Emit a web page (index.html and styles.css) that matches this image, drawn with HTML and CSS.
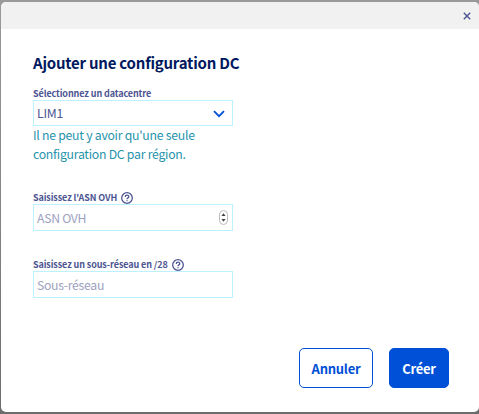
FILE: index.html
```html
<!DOCTYPE html>
<html lang="fr">
<head>
<meta charset="utf-8">
<title>Ajouter une configuration DC</title>
<link rel="stylesheet" href="styles.css">
</head>
<body>
<div class="modal">
  <header class="modal-header">
    <svg class="close" viewBox="0 0 8 8"><path d="M.8 .8 7.2 7.2M7.2 .8 .8 7.2"/></svg>
  </header>
  <main class="modal-body">
    <h1 class="title">Ajouter une configuration DC</h1>
    <div class="field field-select">
      <div class="label">Sélectionnez un datacentre</div>
      <div class="control select"><span class="value">LIM1</span>
        <svg class="chevron" viewBox="0 0 12 8"><path d="M1 1.2 6 6.2 11 1.2"/></svg>
      </div>
      <p class="help">Il ne peut y avoir qu'une seule<br>configuration DC par région.</p>
    </div>
    <div class="field field-asn">
      <div class="label">Saisissez l'ASN OVH
        <svg class="info" viewBox="0 0 12 12"><circle cx="6" cy="6" r="5.3"/><path d="M4.3 4.9C4.3 2.6 7.8 2.7 7.8 4.7 7.8 5.9 6 5.8 6 7.2M6 8.2v1.1"/></svg>
      </div>
      <div class="control"><span class="placeholder">ASN OVH</span>
        <svg class="spinner" viewBox="0 0 9 15"><rect x=".5" y=".5" width="8" height="14" rx="4"/><path d="M2.4 6 4.5 3.2 6.6 6zM2.4 9 4.5 11.8 6.6 9z"/></svg>
      </div>
    </div>
    <div class="field">
      <div class="label">Saisissez un sous-réseau en /28
        <svg class="info" viewBox="0 0 12 12"><circle cx="6" cy="6" r="5.3"/><path d="M4.3 4.9C4.3 2.6 7.8 2.7 7.8 4.7 7.8 5.9 6 5.8 6 7.2M6 8.2v1.1"/></svg>
      </div>
      <div class="control"><span class="placeholder">Sous-réseau</span></div>
    </div>
  </main>
  <footer class="actions">
    <button class="button cancel">Annuler</button>
    <button class="button create">Créer</button>
  </footer>
</div>
</body>
</html>
```
FILE: styles.css
```css
* { box-sizing: border-box; }
body {
  margin: 0;
  height: 414px;
  padding: 2px 1px;
  overflow: hidden;
  background: linear-gradient(#999 0, #858585 50%, #6c6c6c 100%);
  font-family: "Noto Sans CJK SC", "Noto Sans", sans-serif;
  color: #4d5592;
}
.modal {
  display: flex;
  flex-direction: column;
  width: 478px;
  height: 410px;
  border-radius: 5px;
  overflow: hidden;
  background: #fff;
}
.modal-header {
  flex: none;
  display: flex;
  justify-content: flex-end;
  height: 27px;
  padding: 10px 8px 0 0;
  background: #f1f1f1;
}
svg { flex: none; fill: none; }
.close { width: 8px; height: 8px; stroke: #4d5592; stroke-width: 1.4; }
.modal-body { flex: 1; padding: 23px 32px 0; }
.title {
  margin: 0;
  font-size: 15px;
  line-height: 22px;
  letter-spacing: -.23px;
  font-weight: 700;
  color: #00185e;
  white-space: nowrap;
}
.field { width: 200px; }
.field-select { height: 117px; padding-top: 13px; }
.field-asn { height: 67px; }
.label {
  display: flex;
  align-items: center;
  gap: 4px;
  height: 13px;
  font-size: 9px;
  line-height: 13px;
  letter-spacing: -.1px;
  font-weight: 700;
  white-space: nowrap;
}
.info { width: 12px; height: 12px; stroke: #4d5592; stroke-width: 1.3; }
.control {
  display: flex;
  align-items: center;
  justify-content: space-between;
  height: 27px;
  padding: 0 4px 0 3px;
  border: 1px solid #bef1ff;
  font-size: 12.25px;
  line-height: 20px;
}
.select { height: 26px; padding-right: 7px; }
.value { letter-spacing: -.2px; }
.placeholder { color: #9da1c0; letter-spacing: -.3px; }
.chevron { width: 12px; height: 8px; margin-top: 2px; stroke: #0050d7; stroke-width: 1.8; }
.spinner { width: 9px; height: 15px; stroke: #bbb; }
.spinner path { fill: #444; stroke: none; }
.help {
  margin: 0;
  font-size: 12.25px;
  line-height: 19px;
  letter-spacing: -.26px;
  color: #2693ad;
  white-space: nowrap;
}
.actions {
  flex: none;
  display: flex;
  gap: 16px;
  justify-content: flex-end;
  height: 64px;
  padding-right: 30px;
}
.button {
  height: 40px;
  padding: 2px 0 0;
  border: 1px solid #0050d7;
  border-radius: 5px;
  font: 700 13px/20px "Noto Sans CJK SC", "Noto Sans", sans-serif;
  letter-spacing: -.25px;
}
.cancel { width: 74px; background: #fff; color: #0050d7; }
.create { width: 60px; background: #0050d7; color: #fff; }
```
